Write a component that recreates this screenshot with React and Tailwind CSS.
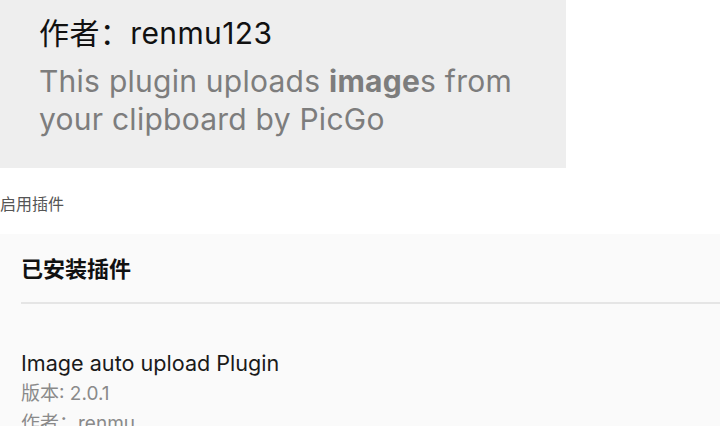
import React from 'react';

const font = { fontFamily: 'Inter, "Noto Sans CJK SC", sans-serif' };

function PluginCard({ name, version, author }) {
  return (
    <div className="pt-[44px] pb-4">
      <div className="text-[21.6px] leading-[30px] text-[#1a1a1a]">{name}</div>
      <div className="text-[19px] leading-[32px] text-[#8a8a8a]">版本: {version}</div>
      <div className="text-[19px] leading-[28px] text-[#8a8a8a]">作者：{author}</div>
    </div>
  );
}

export default function App() {
  return (
    <div className="w-[720px] h-[426px] overflow-hidden bg-white" style={font}>
      {/* Readme preview */}
      <div className="w-[566px] h-[168px] bg-[#eeeeee] pl-[39px] pt-[14px]">
        <div className="text-[30px] leading-[38px] tracking-[0.4px] text-[#111111]">作者：renmu123</div>
        <p className="text-[30px] leading-[38px] tracking-[0.25px] text-[#7d7d7d] mt-[10px]">
          This plugin uploads <b className="font-bold">image</b>s from your clipboard by PicGo
        </p>
      </div>

      <div className="text-[16px] leading-[22px] text-[#555555] mt-[25px]">启用插件</div>

      {/* Installed plugins */}
      <div className="mt-[19px] bg-[#fafafa] pl-[21px]">
        <div className="h-[70px] flex items-center border-b-2 border-[#e5e5e5]">
          <h2 className="text-[22px] font-bold text-[#111111] pt-[2px]">已安装插件</h2>
        </div>
        <PluginCard name="Image auto upload Plugin" version="2.0.1" author="renmu" />
      </div>
    </div>
  );
}
